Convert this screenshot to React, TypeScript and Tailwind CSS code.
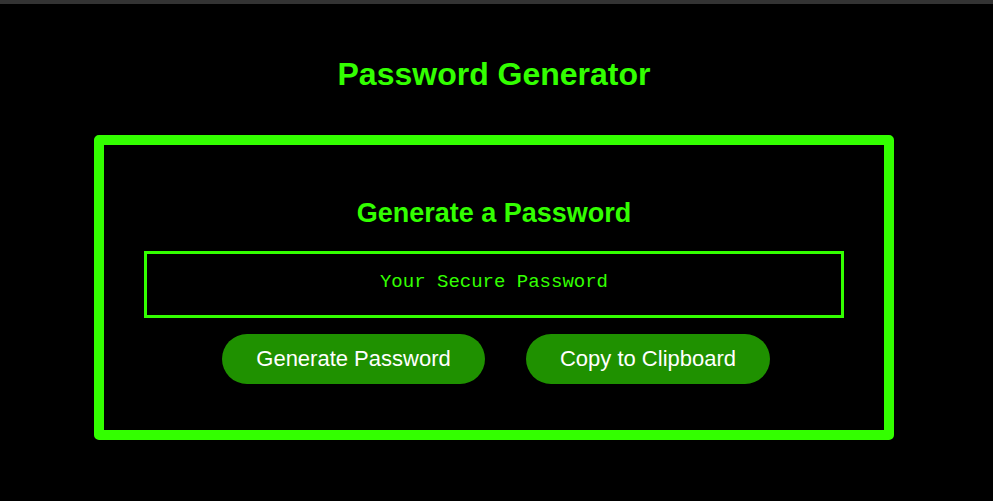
export default function App() {
  return (
    <div className="min-h-[501px] w-full bg-black" style={{ fontFamily: '"Liberation Sans", Arial, sans-serif' }}>
      <div className="h-[4px] bg-[#333333]" />
      <div className="w-[988px] flex flex-col items-center">
        <h1 className="mt-[50px] h-[40px] text-[32px] leading-[40px] font-bold text-[#33ff00]">Password Generator</h1>
        <div className="mt-[41px] w-[800px] h-[305px] border-[10px] border-[#33ff00] rounded-[5px] flex flex-col items-center pt-[52px]">
          <h2 className="text-[27px] leading-[32px] font-bold text-[#33ff00]">Generate a Password</h2>
          <div
            className="mt-[22px] w-[700px] h-[67px] border-[3px] border-[#33ff00] flex items-center justify-center pb-[5px] text-[19px] text-[#33ff00]"
            style={{ fontFamily: '"Liberation Mono", "Courier New", monospace' }}
          >
            Your Secure Password
          </div>
          <div className="mt-[16px] flex gap-[41px] pl-[4px]">
            <button className="h-[50px] w-[263px] rounded-full bg-[#1f9100] pb-[2px] text-white text-[22px] leading-[25px]">Generate Password</button>
            <button className="h-[50px] w-[244px] rounded-full bg-[#1f9100] pb-[2px] text-white text-[22px] leading-[25px]">Copy to Clipboard</button>
          </div>
        </div>
      </div>
    </div>
  );
}
